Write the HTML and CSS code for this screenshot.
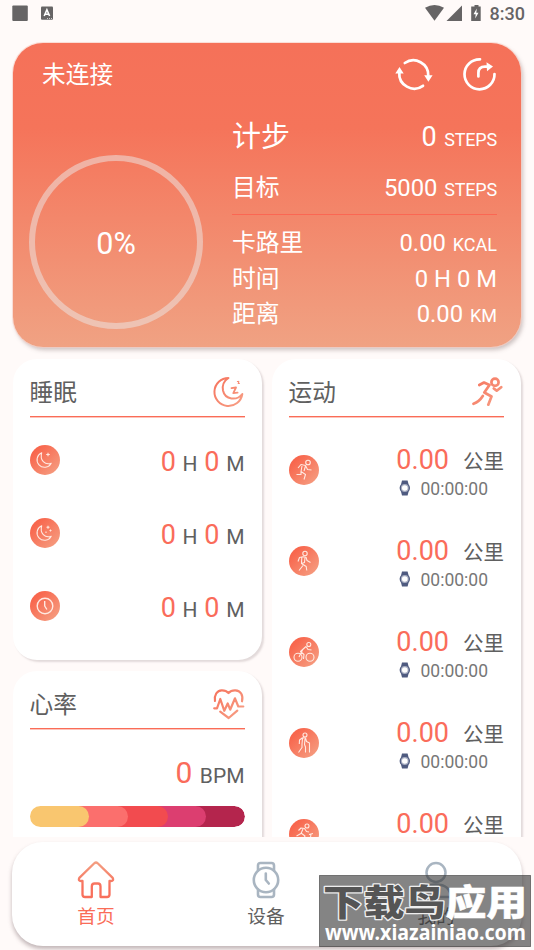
FILE: index.html
```html
<!DOCTYPE html>
<html lang="zh-CN">
<head>
<meta charset="utf-8">
<meta name="viewport" content="width=device-width">
<title>首页</title>
<link rel="stylesheet" href="styles.css">
</head>
<body>
<svg class="defs" width="0" height="0" aria-hidden="true">
  <defs>
    <linearGradient id="coral" x1="0" y1="0" x2="32" y2="32" gradientUnits="userSpaceOnUse"><stop offset="0" stop-color="#f6705a"/><stop offset="1" stop-color="#f7a48a"/></linearGradient>
    <linearGradient id="coralUp" x1="0" y1="0" x2="0" y2="37" gradientUnits="userSpaceOnUse"><stop offset="0" stop-color="#f3a083"/><stop offset=".7" stop-color="#f8705c"/></linearGradient>
    <symbol id="watch" viewBox="0 0 12 16"><path d="M3 0.5h5.6l1 4h-7.600zM3 15.500h5.600l1-4h-7.600z" fill="#4f5b80"/><circle cx="5.800" cy="8" r="5.200" fill="#4f5b80"/><circle cx="5.800" cy="8" r="3.900" fill="#a8aec2"/><circle cx="5.800" cy="8" r="2.800" fill="#fff"/></symbol>
  </defs>
</svg>

<header class="status">
  <svg width="44" height="18" viewBox="0 0 44 18"><rect x="0.300" y="1.500" width="15.500" height="15.500" rx="1" fill="#666465"/><rect x="29" y="2.500" width="12" height="13.200" rx="1" fill="#666465"/><path d="M32.200 12 34.900 5.800 37.600 12M33.200 10.200h3.400" fill="none" stroke="#fff" stroke-width="1.600"/><path d="M35 14.500h5" stroke="#ccc" stroke-dasharray="1 1"/></svg>
  <div class="status-right">
    <svg width="58" height="18" viewBox="0 0 58 18" fill="#666465"><path d="M0 3.800Q9.500 -1.800 19 3.800L9.500 16.700z"/><path d="M37 1.500V17H21.500z"/><path d="M49.500 1h4v1.500h2.200V17H46.200V2.500H49.500z"/><path d="M51.800 4.500 48.500 10.300h2.200L50.200 14.500 53.500 8.700h-2.200z" fill="#fff"/></svg>
    <span class="clock">8:30</span>
  </div>
</header>

<section class="hero">
  <div class="hero-head">
    <span>未连接</span>
    <div class="hero-actions">
      <svg width="38" height="38" viewBox="0 0 38 38"><g fill="none" stroke="#fff" stroke-width="2.700" stroke-linecap="round"><path d="M9.800 7A15 15 0 0 1 33.300 20"/><path d="M28 29.800A15 15 0 0 1 4.300 16.500"/></g><path d="M29.200 19.200h8.400L33.400 25.700zM.3 17.500h8.400L4.500 11z" fill="#fff"/></svg>
      <svg width="38" height="38" viewBox="0 0 38 38"><g fill="none" stroke="#fff" stroke-width="2.700" stroke-linecap="round"><path d="M19 3.300A15 15 0 1 0 33.500 18"/><path d="M17.400 20.500V17Q17.400 10.700 24 10.700h2.500"/></g><path d="M25.500 6.300 32 10.500 26 15.300z" fill="#fff"/></svg>
    </div>
  </div>
  <div class="hero-body">
    <div class="ring">0%</div>
    <div class="stats">
      <div class="stat main"><span>计步</span><span>0 <small>STEPS</small></span></div>
      <div class="stat goal"><span>目标</span><span>5000 <small>STEPS</small></span></div>
      <div class="stat"><span>卡路里</span><span>0.00 <small>KCAL</small></span></div>
      <div class="stat"><span>时间</span><span>0 H 0 M</span></div>
      <div class="stat"><span>距离</span><span>0.00 <small>KM</small></span></div>
    </div>
  </div>
</section>

<main class="board">
  <div class="col">
    <section class="card">
      <div class="card-head"><h2>睡眠</h2>
        <svg width="32" height="32" viewBox="0 0 32 32" fill="none" stroke="url(#coral)" stroke-width="2" stroke-linecap="round" stroke-linejoin="round"><path d="M15.500 2A14 14 0 1 0 29.300 18C24 25 12 24 10 14.500 9 9 11.500 4.500 15.500 2z"/><path d="M18.500 12.200 23 11.500 20.300 17.200 24.600 16.700" stroke-width="1.800"/><path d="M24.300 5.600 26 5.300 25 7.600 26.600 7.300" stroke-width="1"/></svg>
      </div>
      <div class="sleep-row"><svg class="badge" viewBox="0 0 30 30"><path d="M11.700 7.800A7.500 7.500 0 1 0 21.200 18.200C15 20.500 9.500 15 11.700 7.800zM18 7.700v3.600M16.200 9.500h3.600"/></svg><p class="num">0 <small>H</small> 0 <small>M</small></p></div>
      <div class="sleep-row"><svg class="badge" viewBox="0 0 30 30"><path d="M11.700 7.800A7.500 7.500 0 1 0 21.200 18.200C15 20.500 9.500 15 11.700 7.800zM18 7.700v3M16.500 9.200h3M20.500 11.500v2M19.500 12.500h2M16 13.500v1.600"/></svg><p class="num">0 <small>H</small> 0 <small>M</small></p></div>
      <div class="sleep-row"><svg class="badge" viewBox="0 0 30 30"><g stroke-width="1.400"><circle cx="15" cy="15" r="7.800"/><path d="M14.700 10v5l2.200 3.500"/></g></svg><p class="num">0 <small>H</small> 0 <small>M</small></p></div>
    </section>
    <section class="card heart">
      <div class="card-head"><h2>心率</h2>
        <svg width="32" height="32" viewBox="0 0 32 32" fill="none" stroke="url(#coral)" stroke-width="2.200" stroke-linecap="round" stroke-linejoin="round"><path d="M2 13C1 7 4 2.500 8.700 2.300 12 2.200 14 3.300 15.500 5 17 3.300 19 2.200 22.300 2.300 27.500 2.500 30.500 7 29 13.300"/><path d="M1.200 20.300H4L7.300 11 11.300 22.800 14.700 15.500 17.200 21.700 22 10.300 25.300 18.500H30.300"/><path d="M7.200 23.700 15.700 30 24.300 22.600"/></svg>
      </div>
      <p class="num bpm">0 <small>BPM</small></p>
      <div class="zones"><i class="z1"></i><i class="z2"></i><i class="z3"></i><i class="z4"></i><i class="z5"></i></div>
    </section>
  </div>
  <div class="col">
    <section class="card">
      <div class="card-head"><h2>运动</h2>
        <svg width="32" height="32" viewBox="0 0 32 32" fill="none" stroke="url(#coral)" stroke-width="2.700" stroke-linecap="round" stroke-linejoin="round"><circle cx="23" cy="6.200" r="3.600"/><path d="M7.300 9 12 6.500 17.500 9 12.300 16.500 19.500 20.500 16.300 28.700M10.800 20C8 24.500 5 26.500 1.500 27.800M21.800 12.500 24.700 14.700 29.200 11.200"/></svg>
      </div>
      <div class="sport-row"><svg class="badge" viewBox="0 0 30 30"><circle cx="19" cy="7.500" r="2.300"/><path d="M9 13 12 9.500 16.500 10.500 18.500 14.500 22.500 15M13 11 12 16.500 12 19.500H7.500M12 16.500 16.500 19.500 15 24.500M16.500 11 15 16"/></svg><div class="data"><p class="num">0.00<small>公里</small></p><p class="time"><svg width="12" height="16"><use href="#watch"/></svg>00:00:00</p></div></div>
      <div class="sport-row"><svg class="badge" viewBox="0 0 30 30"><circle cx="16" cy="7.500" r="2.200"/><path d="M9 15.500 10.500 11.500 14 10.800 17 11.200 18 14.500 21.500 16.500M12.800 11.500 12.500 17M16 11.500 15.500 16.500 12.500 17.500 17.200 20.500 17.800 24.500M14 19.500 10 24.500"/></svg><div class="data"><p class="num">0.00<small>公里</small></p><p class="time"><svg width="12" height="16"><use href="#watch"/></svg>00:00:00</p></div></div>
      <div class="sport-row"><svg class="badge" viewBox="0 0 30 30"><circle cx="19.800" cy="7.500" r="2"/><circle cx="9" cy="20.200" r="4"/><circle cx="21" cy="20.200" r="4"/><path d="M17 9.500 11.500 14.500 15 17.500 14.500 22M13.500 13 10 20M17 9.500 19 12.500 22.500 13"/></svg><div class="data"><p class="num">0.00<small>公里</small></p><p class="time"><svg width="12" height="16"><use href="#watch"/></svg>00:00:00</p></div></div>
      <div class="sport-row"><svg class="badge" viewBox="0 0 30 30"><circle cx="16" cy="7" r="2"/><path d="M13.500 9.800 10.500 12 10.300 16M13.500 9.800 16.500 10 17.500 13.500 20.500 15V24.500M13.500 10.500 13 16 13 19.500 9.500 24.500M16 11 15.500 16.500 16.500 19V24.500"/></svg><div class="data"><p class="num">0.00<small>公里</small></p><p class="time"><svg width="12" height="16"><use href="#watch"/></svg>00:00:00</p></div></div>
      <div class="sport-row"><svg class="badge" viewBox="0 0 30 30"><circle cx="18" cy="7" r="2"/><path d="M9.500 11.500 12 9 15.500 9.500 17.500 12.500 20 13M14 10 12 14.500 7.500 17M12 14 16 17 14 22M20 15.500 24 14.500M22 15 21 22M8 22H23"/></svg><div class="data"><p class="num">0.00<small>公里</small></p><p class="time"><svg width="12" height="16"><use href="#watch"/></svg>00:00:00</p></div></div>
    </section>
  </div>
</main>

<nav class="tabs">
  <a class="tab active"><svg width="38" height="38" viewBox="0 0 38 38" fill="none" stroke="url(#coralUp)" stroke-width="2.300" stroke-linejoin="round"><path d="M17.300 2.300Q19 .8 20.700 2.300L35.700 16.900Q37 20 34 20H32.500V33.500Q32.500 36 30 36H23.500V25.500Q23.500 22.500 21 22.500H17.500Q14.800 22.500 14.800 25.500V36H8Q5.500 36 5.500 33.500V20H4Q1 20 2.300 16.900z"/></svg><span>首页</span></a>
  <a class="tab"><svg width="38" height="38" viewBox="0 0 38 38" fill="none" stroke="#a9b5c1" stroke-width="2.600" stroke-linecap="round" stroke-linejoin="round"><circle cx="19" cy="19" r="12.200"/><path d="M11 9.500V4.500Q11 2 13.500 2H24.500Q27 2 27 4.500V9.500M11 28.500V33.500Q11 36 13.500 36H24.500Q27 36 27 33.500V28.500M18.800 12.500V19L21.800 22.500"/></svg><span>设备</span></a>
  <a class="tab"><svg width="38" height="38" viewBox="0 0 38 38" fill="none" stroke="#a9b5c1" stroke-width="2.500"><circle cx="19" cy="11.500" r="9.500"/><path d="M4 36Q5 23.500 19 23.500T34 36z"/></svg><span>我的</span></a>
</nav>

<svg class="watermark" width="212" height="72" viewBox="0 0 212 72">
  <rect x=".5" y=".5" width="211" height="71"/>
  <text class="wm-name" x="4" y="41" textLength="204" lengthAdjust="spacingAndGlyphs"><tspan class="wm-dark">下载鸟</tspan><tspan class="wm-light">应用</tspan></text>
  <text class="wm-url" x="6" y="64.500" textLength="201" lengthAdjust="spacingAndGlyphs">www.xiazainiao.com</text>
</svg>
</body>
</html>
```
FILE: styles.css
```css
* { box-sizing: border-box; }
html, body { height: 100%; }
body {
  margin: 0;
  height: 950px;
  display: flex;
  flex-direction: column;
  overflow: hidden;
  position: relative;
  background: #fffaf9;
  color: #606060;
  font-family: Roboto, "Noto Sans CJK SC", sans-serif;
}
h2, p { margin: 0; font-weight: 400; }
svg { display: block; flex: none; }
.defs { position: absolute; }

.status {
  height: 43px;
  flex: none;
  display: flex;
  justify-content: space-between;
  align-items: flex-start;
  padding: 4px 9px 0 12px;
}
.status-right { display: flex; gap: 7px; }
.clock { font-size: 18px; font-weight: 500; line-height: 20px; color: #666465; }

.hero {
  flex: none;
  height: 304px;
  margin: 0 13px;
  border-radius: 30px;
  background: linear-gradient(#f57159 0, #f5745a 28%, #f0a283 100%);
  box-shadow: 0 0 0 1px rgba(250, 205, 195, .6), 2px 3px 4px rgba(110, 90, 90, .35);
  color: #fff;
}
.hero-head {
  height: 71px;
  padding: 0 22px 0 29px;
  display: flex;
  justify-content: space-between;
  font-size: 23.700px;
  line-height: 65px;
}
.hero-actions { display: flex; gap: 28px; padding-top: 13px; }
.hero-body { display: flex; justify-content: space-between; padding: 0 24px 0 16px; }
.ring {
  width: 174px;
  height: 174px;
  margin-top: 41px;
  border: 6.500px solid rgba(237, 228, 226, .53);
  border-radius: 50%;
  text-align: center;
  font-size: 30.500px;
  line-height: 165px;
}
.stats { width: 265px; }
.stat {
  display: flex;
  justify-content: space-between;
  align-items: baseline;
  height: 35.500px;
  line-height: 37px;
  font-size: 23.800px;
}
.stat small { font-size: 18px; margin-left: 1px; }
.stat.main { height: 44px; line-height: 44px; font-size: 27px; margin-bottom: 12px; }
.stat.main small, .stat.goal small { letter-spacing: -.2px; }
.stat.main span:first-child { font-size: 29px; position: relative; top: 1px; }
.stat.goal { height: 45px; margin-bottom: 10px; border-bottom: 1.500px solid #fb6753; }

.board {
  flex: none;
  height: 490px;
  overflow: hidden;
  display: grid;
  grid-template-columns: 249px 249.500px;
  gap: 10px;
  padding: 12px 12px 0 12.500px;
}
.card {
  height: 301px;
  padding: 0 17px;
  border-radius: 24px;
  background: #fff;
  box-shadow: 2px 2px 2px rgba(110, 90, 95, .2);
}
.card + .card { margin-top: 11px; }
.col:last-child .card { height: 560px; }
.card-head {
  height: 58px;
  display: flex;
  justify-content: space-between;
  padding-top: 17px;
  border-bottom: 1px solid #fa6c57;
  box-shadow: 0 1px 0 rgba(250, 108, 87, .4);
  margin-bottom: 7px;
}
h2 { font-size: 23.700px; line-height: 35px; }
.sleep-row {
  height: 72.700px;
  display: flex;
  align-items: center;
  justify-content: space-between;
}
.badge {
  width: 30px;
  height: 30px;
  border-radius: 50%;
  background: linear-gradient(135deg, #f8674e 20%, #f5a386);
  fill: none;
  stroke: #ffe9e1;
  stroke-width: 1.100;
  stroke-linejoin: round;
}
.num { font-size: 27px; line-height: 32px; color: #fa6c5a; }
.num small { font-size: 21px; color: #606060; }
.sleep-row .num { padding-top: 6px; }
.sport-row {
  height: 91.200px;
  display: flex;
  align-items: center;
  justify-content: space-between;
}
.sport-row .num small { margin-left: 14px; font-size: 20.500px; }
.data { display: flex; flex-direction: column; align-items: flex-end; padding-top: 4px; }
.time {
  display: flex;
  align-items: center;
  gap: 10px;
  padding-right: 16px;
  font-size: 17.500px;
  line-height: 22px;
  color: #777;
}
.time svg { position: relative; top: -1px; }
.bpm { text-align: right; font-size: 30px; line-height: 40px; padding-top: 17px; }
.zones {
  display: flex;
  height: 21px;
  margin-top: 10px;
  border-radius: 11px;
  overflow: hidden;
}
.zones i { margin-left: -11px; border-radius: 0 11px 11px 0; position: relative; }
.zones .z1 { width: 59.500px; margin-left: 0; background: #f9c66f; z-index: 5; }
.z2 { width: 50px; background: #fb6f6d; z-index: 4; }
.z3 { width: 51px; background: #f24b4f; z-index: 3; }
.z4 { width: 48.500px; background: #dc3e70; z-index: 2; }
.z5 { flex: 1; background: #b4254d; }

.tabs {
  flex: none;
  height: 104px;
  margin: 5px 12px 0;
  display: grid;
  grid-template-columns: repeat(3, 1fr);
  border-radius: 31px;
  background: #fff;
  box-shadow: 0 3px 4px rgba(120, 100, 105, .45);
}
.tab {
  display: flex;
  flex-direction: column;
  align-items: center;
  padding: 19px 2px 0 0;
  font-size: 18.700px;
  line-height: 37px;
}
.tab.active { color: #fa6c57; }

.watermark { position: absolute; left: 319px; top: 875px; }
.watermark rect { fill: rgba(50, 50, 50, .6); stroke: rgba(60, 60, 60, .6); }
.wm-name {
  font: 900 36px "Noto Sans CJK SC", sans-serif;
  paint-order: stroke;
  stroke-linejoin: round;
}
.wm-dark { fill: #555; stroke: #eee; stroke-width: 2.500px; }
.wm-light { fill: #fff; stroke: #fff; stroke-width: .5px; }
.wm-url { font: 700 22px "Noto Sans", sans-serif; fill: #fff; }
```
